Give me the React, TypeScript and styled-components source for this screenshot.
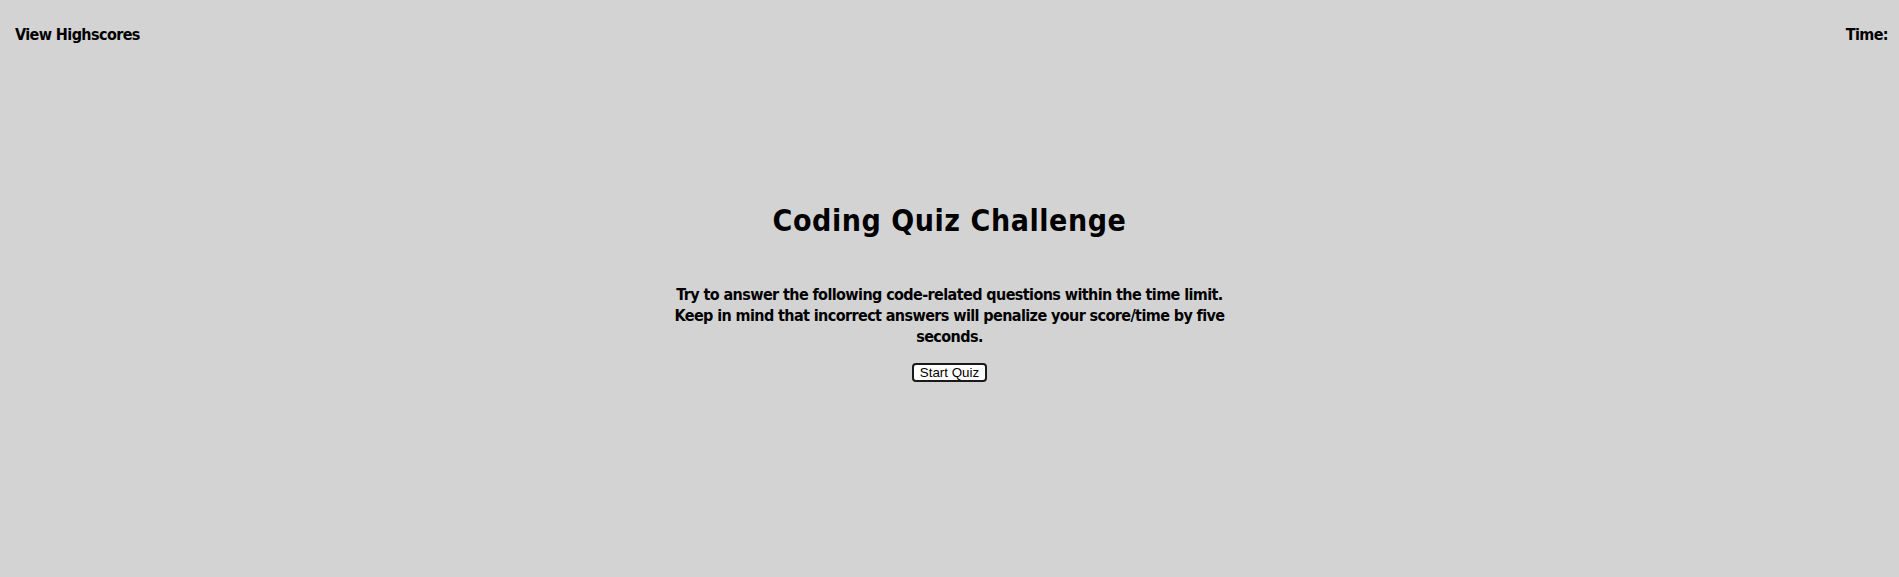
import React from "react";
import styled, { createGlobalStyle } from "styled-components";

const GlobalStyle = createGlobalStyle`
  html, body {
    margin: 0;
    padding: 0;
    background: #d3d3d3;
    height: 100%;
  }
  body {
    font-family: "DejaVu Sans Condensed", "DejaVu Sans", Verdana, sans-serif;
    color: #000;
  }
`;

const Page = styled.div`
  min-height: 577px;
  background: #d3d3d3;
  display: flex;
  flex-direction: column;
`;

const Header = styled.header`
  display: flex;
  justify-content: space-between;
  align-items: center;
  padding: 25px 11px 0 15px;
  font-size: 16px;
  font-weight: bold;
  line-height: 19px;
  letter-spacing: -0.6px;
`;

const HeaderLink = styled.a`
  color: #000;
  text-decoration: none;
  cursor: pointer;
`;

const Timer = styled.div`
  color: #000;
`;

const Main = styled.main`
  display: flex;
  flex-direction: column;
  align-items: center;
  padding-top: 158px;
`;

const Title = styled.h1`
  margin: 0;
  font-size: 30px;
  line-height: 38px;
  font-weight: bold;
  letter-spacing: 0.55px;
`;

const Intro = styled.p`
  width: 570px;
  margin: 44px 0 0;
  text-align: center;
  font-size: 16px;
  line-height: 21px;
  font-weight: bold;
  letter-spacing: -0.6px;
`;

const StartButton = styled.button`
  margin-top: 16px;
  font-family: "Liberation Sans", Arial, sans-serif;
  font-size: 13.33px;
  line-height: 15px;
  padding: 0 6px;
  background: #fff;
  color: #000;
  border: 2px solid #1a1a1a;
  border-radius: 4px;
  cursor: pointer;
`;

export default function App() {
  return (
    <>
      <GlobalStyle />
      <Page>
        <Header>
          <HeaderLink>View Highscores</HeaderLink>
          <Timer>Time:</Timer>
        </Header>
        <Main>
          <Title>Coding Quiz Challenge</Title>
          <Intro>
            Try to answer the following code-related questions within the time
            limit. Keep in mind that incorrect answers will penalize your
            score/time by five seconds.
          </Intro>
          <StartButton>Start Quiz</StartButton>
        </Main>
      </Page>
    </>
  );
}
